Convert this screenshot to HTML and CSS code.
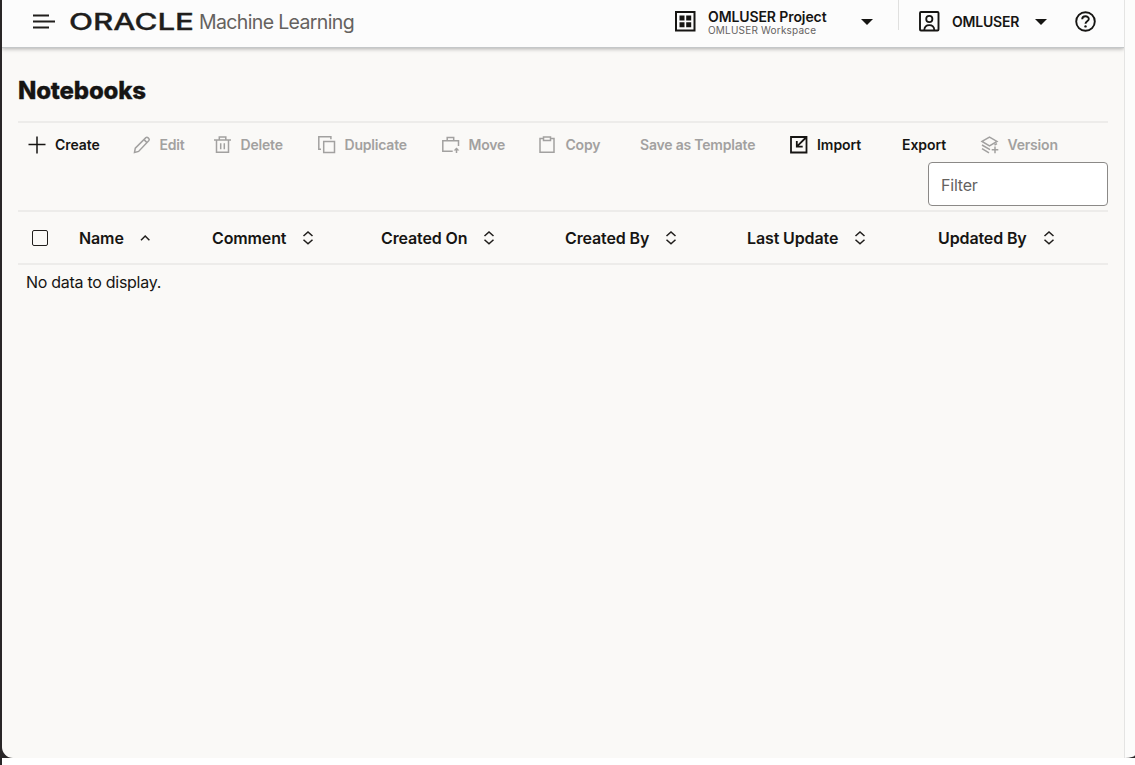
FILE: index.html
```html
<!DOCTYPE html>
<html lang="en">
<head>
<meta charset="utf-8">
<title>Notebooks</title>
<link rel="stylesheet" href="styles.css">
</head>
<body>
<div class="window">
  <div class="app">
    <header class="topbar">
      <svg class="menu" width="23" height="16" viewBox="0 0 23 16"><path d="M0 1.500h16M0 7.500h22M0 13.500h16"/></svg>
      <svg class="brand" width="124" height="20" viewBox="0 0 124 20"><text x="-1" y="17.500" textLength="125" lengthAdjust="spacingAndGlyphs">ORACLE</text></svg>
      <span class="product">Machine Learning</span>
      <div class="project">
        <svg class="ico" width="21" height="21" viewBox="0 0 21 21"><path d="M1 1h18.500v18.500H1z" stroke-width="2"/><path class="solid" d="M4.500 4.500h5v5h-5zM11.200 4.500h5v5h-5zM4.500 11.200h5v5h-5zM11.200 11.200h5v5h-5z"/></svg>
        <div class="names"><b class="project-name">OMLUSER Project</b><span class="workspace">OMLUSER Workspace</span></div>
        <svg class="caret" width="12" height="6" viewBox="0 0 12 6"><path d="M0 0h12L6 6z"/></svg>
      </div>
      <div class="account">
        <svg class="ico" width="21" height="21" viewBox="0 0 21 21"><rect x="1" y="1" width="18.500" height="18.500" rx="1" stroke-width="1.900"/><circle cx="10.300" cy="8" r="3.100" stroke-width="1.800"/><path d="M5.300 19c.2-3.200 2-4.800 5-4.800s4.800 1.600 5 4.800" stroke-width="1.800"/></svg>
        <b class="user">OMLUSER</b>
        <svg class="caret" width="12" height="6" viewBox="0 0 12 6"><path d="M0 0h12L6 6z"/></svg>
        <svg class="ico help" width="21" height="21" viewBox="0 0 21 21"><circle cx="10.500" cy="10.500" r="9.300" stroke-width="1.900"/><path d="M7.200 8.300c0-4 6.600-4 6.600-.3 0 2.400-3.300 2.200-3.300 4.800" stroke-width="1.900"/><circle class="solid" cx="10.500" cy="15.400" r="1.200"/></svg>
      </div>
    </header>
    <main class="page">
      <h1 class="title">Notebooks</h1>
      <div class="tools">
        <div class="toolbar">
          <span class="tool on"><svg class="ico" width="18" height="18" viewBox="0 0 18 18"><path d="M9 .5v17M.5 8.500h17"/></svg><span>Create</span></span>
          <span class="tool"><svg class="ico" width="18" height="18" viewBox="0 0 18 18"><path d="M1.500 16.500l.8-4.300L12.900 1.600c1.400-1.200 4.300 1.500 3 3L5.600 15.400zM11 3.600l3.300 3.300"/></svg><span>Edit</span></span>
          <span class="tool"><svg class="ico" width="18" height="18" viewBox="0 0 18 18"><path d="M0 4h17M5.300 4V1h6.500v3M2.500 4v12.200h12V4M6.700 7.200v6M10.300 7.200v6"/></svg><span>Delete</span></span>
          <span class="tool"><svg class="ico" width="18" height="18" viewBox="0 0 18 18"><path d="M3 13.200H.8V.8h12.100v2.400M5.700 5.600h10.800v10.800H5.700z"/></svg><span>Duplicate</span></span>
          <span class="tool"><svg class="ico" width="18" height="18" viewBox="0 0 18 18"><path d="M10.700 15.300H.8V4.700h15.700v5.300M5.200 4.700V1.500h6.500v3.200M14.500 17v-4.500"/><path d="M11.600 14.400l2.900-2.900 2.900 2.900z" class="solid"/></svg><span>Move</span></span>
          <span class="tool"><svg class="ico" width="18" height="18" viewBox="0 0 18 18"><path d="M4.300 2.500H1v13.800h14V2.500h-3.300M4.500 1h7v3.400h-7z"/></svg><span>Copy</span></span>
          <span class="tool"><span>Save as Template</span></span>
          <span class="tool on"><svg class="ico" width="18" height="18" viewBox="0 0 18 18"><path d="M1 1h15.500v15.500H1zM16.500 1L7 10.300M6.800 5v5.700h5.900" stroke-width="1.800"/></svg><span>Import</span></span>
          <span class="tool on"><span>Export</span></span>
          <span class="tool"><svg class="ico" width="18" height="18" viewBox="0 0 18 18"><path d="M1 5.400L8.500 1 16 5.400 8.500 9.900zM1 9l8 4.600M1 12.600l7 4.200M14 10.500v6.700M10.700 13.800h6.600M13.500 9l2.500-1.300"/></svg><span>Version</span></span>
        </div>
        <input class="filter" placeholder="Filter">
      </div>
      <div class="thead">
        <span class="check"></span>
        <span class="th"><b>Name</b><svg class="sort" width="12" height="16" viewBox="0 0 12 16"><path d="M1 10.200L5.200 6l4.200 4.200"/></svg></span>
        <span class="th"><b>Comment</b><svg class="sort" width="12" height="16" viewBox="0 0 12 16"><path d="M1.500 6L6 1.900 10.500 6M1.500 9.700L6 13.800 10.500 9.700"/></svg></span>
        <span class="th"><b>Created On</b><svg class="sort" width="12" height="16" viewBox="0 0 12 16"><path d="M1.500 6L6 1.900 10.500 6M1.500 9.700L6 13.800 10.500 9.700"/></svg></span>
        <span class="th"><b>Created By</b><svg class="sort" width="12" height="16" viewBox="0 0 12 16"><path d="M1.500 6L6 1.900 10.500 6M1.500 9.700L6 13.800 10.500 9.700"/></svg></span>
        <span class="th"><b>Last Update</b><svg class="sort" width="12" height="16" viewBox="0 0 12 16"><path d="M1.500 6L6 1.900 10.500 6M1.500 9.700L6 13.800 10.500 9.700"/></svg></span>
        <span class="th"><b>Updated By</b><svg class="sort" width="12" height="16" viewBox="0 0 12 16"><path d="M1.500 6L6 1.900 10.500 6M1.500 9.700L6 13.800 10.500 9.700"/></svg></span>
      </div>
      <p class="empty">No data to display.</p>
    </main>
  </div>
  <div class="gutter"></div>
</div>
</body>
</html>
```
FILE: styles.css
```css
* { box-sizing: border-box; }
body { margin: 0; height: 765px; overflow: hidden; background: #fff; color: #161513; font-family: Inter, "Liberation Sans", sans-serif; border-left: 2px solid #292627; }
b { font-weight: 600; }
svg { display: block; flex: none; overflow: visible; }
.window { height: 758px; display: flex; background: #292627; }
.app { width: 1122px; background: #faf9f7; border-bottom-left-radius: 11px; }
.gutter { flex: 1; background: #fcfcfb; border-left: 1px solid #e4e4e3; border-bottom-right-radius: 10px 3px; }
.topbar { height: 48px; display: flex; align-items: center; padding: 0 28px 4px 31px; background: #fcfcfc; border-bottom: 1px solid #c4c7c9; box-shadow: 0 1px 4px rgba(0, 0, 0, .3); clip-path: inset(0 0 -8px 0); }
.menu path { fill: none; stroke: #201e1c; stroke-width: 1.9; }
.brand { margin-left: 14px; }
.brand text { font: 500 22.500px Inter, sans-serif; fill: #201e1c; stroke: #201e1c; stroke-width: .3; }
.product { margin: 1px 0 0 5px; width: 155px; white-space: nowrap; font-size: 19.500px; letter-spacing: -.64px; color: #65625f; }
.ico { fill: none; stroke: currentColor; stroke-width: 1.5; }
.ico .solid { fill: currentColor; stroke: none; }
.caret { fill: #161513; }
.project { display: flex; align-items: center; margin-left: auto; }
.names { width: 153px; margin-left: 12px; padding-top: 1px; display: flex; flex-direction: column; white-space: nowrap; }
.project-name { font-size: 14px; line-height: 15px; letter-spacing: -.1px; }
.workspace { font-size: 10px; line-height: 12px; letter-spacing: .05px; color: #65625f; }
.project-name + .workspace { width: 106px; letter-spacing: .02em; }
.account { display: flex; align-items: center; margin-left: 25px; padding-left: 20px; height: 30px; margin-top: -13px; border-left: 1px solid #e0e0df; padding-top: 13px; }
.user { width: 83px; margin-left: 12px; font-size: 14px; letter-spacing: -.2px; }
.help { margin-left: 28px; }
.page { padding: 27px 16px 0 16px; }
.title { margin: 0; font-size: 24px; line-height: 32px; font-weight: 800; letter-spacing: -.2px; -webkit-text-stroke: .3px; }
.tools { margin-top: 14px; height: 89px; border-top: 2px solid #edecea; display: flex; flex-direction: column; }
.toolbar { height: 39px; padding: 5px 0 0 10px; display: grid; grid-template-columns: 105px 81px 104px 124px 97px 101px 150px 112px 79px 1fr; align-items: center; }
.tool { display: flex; align-items: center; gap: 8.5px; font-size: 14px; font-weight: 600; letter-spacing: -.2px; color: #a2a1a0; white-space: nowrap; }
.tool span { padding-bottom: 1px; }
.tool.on { gap: 9px; color: #161513; letter-spacing: -.05px; }
.filter { flex: none; align-self: flex-end; width: 180px; height: 44px; border: 1px solid #8b8987; border-radius: 4px; background: #fff; padding: 2px 12px 0; font: 16px Inter, sans-serif; letter-spacing: -.2px; }
.filter::placeholder { color: #65625f; opacity: 1; }
.thead { height: 55px; border-top: 2px solid #edecea; border-bottom: 2px solid #edecea; display: grid; grid-template-columns: 47px 133px 169px 184px 182px 191px 1fr; align-items: center; padding: 1px 0 0 14px; }
.check { width: 16px; height: 16px; border: 1.500px solid #201e1c; border-radius: 2px; }
.th { display: flex; align-items: center; gap: 16px; font-size: 16px; letter-spacing: -.12px; white-space: nowrap; }
.sort { fill: none; stroke: #201e1c; stroke-width: 1.5; }
.empty { margin: 5px 0 0 8px; font-size: 16px; line-height: 24px; letter-spacing: -.28px; }
```
